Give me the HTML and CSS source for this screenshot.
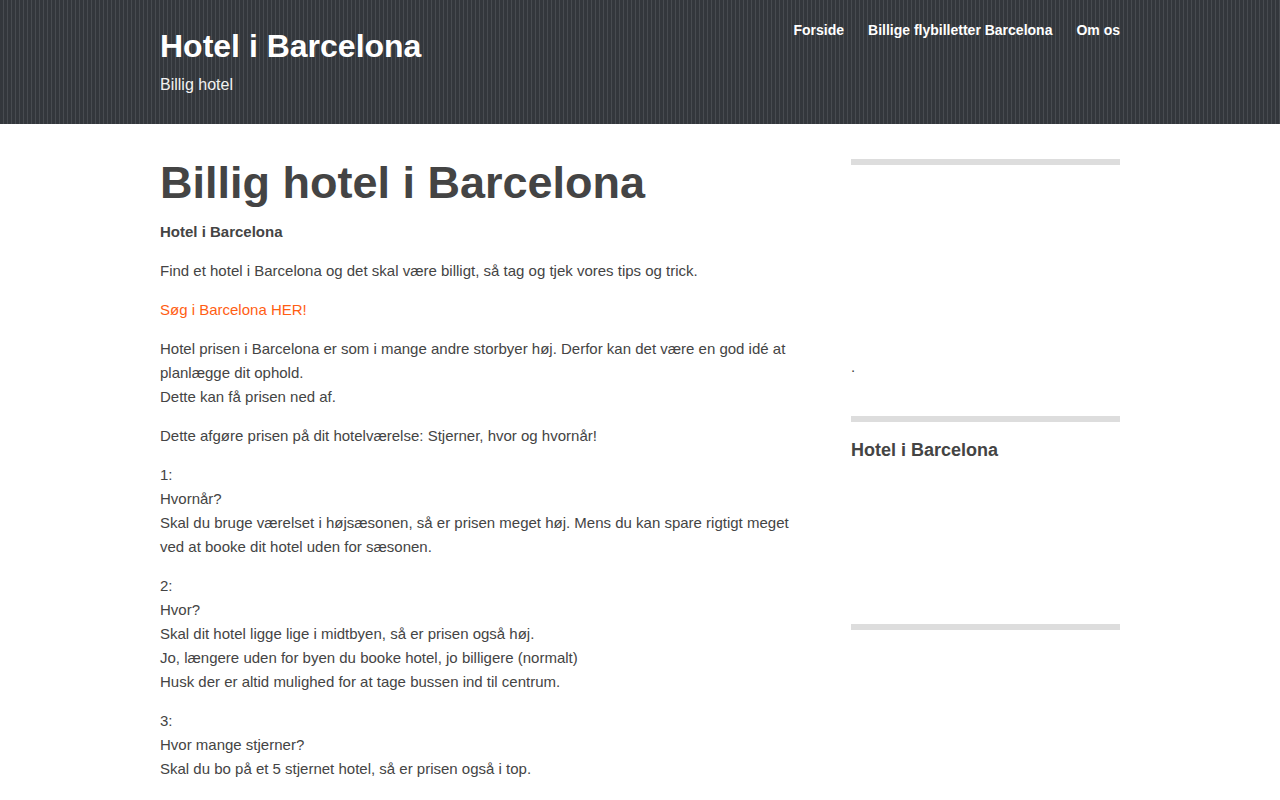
FILE: index.html
```html
<!DOCTYPE html>
<html lang="da">
<head>
<meta charset="utf-8">
<title>Hotel i Barcelona</title>
<link rel="stylesheet" href="styles.css">
</head>
<body>
<header class="site-header">
  <div class="wrap header-inner">
    <div class="branding">
      <div class="site-title">Hotel i Barcelona</div>
      <div class="site-desc">Billig hotel</div>
    </div>
    <nav class="main-nav">
      <a href="#">Forside</a>
      <a href="#">Billige flybilletter Barcelona</a>
      <a href="#">Om os</a>
    </nav>
  </div>
</header>
<div class="wrap main">
  <main class="content">
    <h1 class="entry-title">Billig hotel i Barcelona</h1>
    <p><strong>Hotel i Barcelona</strong></p>
    <p>Find et hotel i Barcelona og det skal være billigt, så tag og tjek vores tips og trick.</p>
    <p><a class="link" href="#">Søg i Barcelona HER!</a></p>
    <p>Hotel prisen i Barcelona er som i mange andre storbyer høj. Derfor kan det være en god idé at planlægge dit ophold.<br>Dette kan få prisen ned af.</p>
    <p>Dette afgøre prisen på dit hotelværelse: Stjerner, hvor og hvornår!</p>
    <p>1:<br>Hvornår?<br>Skal du bruge værelset i højsæsonen, så er prisen meget høj. Mens du kan spare rigtigt meget ved at booke dit hotel uden for sæsonen.</p>
    <p>2:<br>Hvor?<br>Skal dit hotel ligge lige i midtbyen, så er prisen også høj.<br>Jo, længere uden for byen du booke hotel, jo billigere (normalt)<br>Husk der er altid mulighed for at tage bussen ind til centrum.</p>
    <p>3:<br>Hvor mange stjerner?<br>Skal du bo på et 5 stjernet hotel, så er prisen også i top.</p>
  </main>
  <aside class="sidebar">
    <section class="widget">
      <div class="ad-space"></div>
      <p class="dot">.</p>
    </section>
    <section class="widget">
      <h3 class="widget-title">Hotel i Barcelona</h3>
      <div class="ad-space small"></div>
    </section>
    <section class="widget"></section>
  </aside>
</div>
</body>
</html>
```

FILE: styles.css
```css
html, body {
  margin: 0;
  padding: 0;
}
body {
  font-family: "Liberation Sans", Arial, sans-serif;
  font-size: 15px;
  line-height: 24px;
  color: #444;
  background: #fff;
}
.wrap {
  width: 960px;
  margin: 0 auto;
}
.site-header {
  height: 124px;
  background-color: #363a3f;
  background-image: repeating-linear-gradient(90deg, #33373c 0, #33373c 3px, #474b50 3px, #474b50 4px);
  color: #fff;
}
.header-inner {
  display: flex;
  justify-content: space-between;
  align-items: flex-start;
}
.branding {
  padding-top: 26px;
}
.site-title {
  font-size: 32px;
  line-height: 40px;
  font-weight: bold;
}
.site-desc {
  font-size: 16px;
  line-height: 24px;
  margin-top: 7px;
  color: #f2f2f2;
}
.main-nav {
  display: flex;
  gap: 24px;
  padding-top: 20px;
}
.main-nav a {
  color: #fff;
  text-decoration: none;
  font-weight: bold;
  font-size: 14px;
  line-height: 20px;
}
.main {
  display: flex;
  justify-content: space-between;
  padding-top: 35px;
}
.content {
  width: 640px;
}
.entry-title {
  font-size: 45px;
  line-height: 48px;
  font-weight: bold;
  margin: 0 0 13px;
  color: #444;
}
.content p {
  margin: 0 0 15px;
}
.link {
  color: #ff5e14;
  text-decoration: none;
}
.sidebar {
  width: 269px;
}
.widget {
  border-top: 6px solid #ddd;
  margin-bottom: 37px;
}
.ad-space {
  height: 190px;
}
.ad-space.small {
  height: 117px;
}
.dot {
  margin: 0;
}
.widget-title {
  font-size: 18px;
  line-height: 24px;
  font-weight: bold;
  margin: 16px 0 8px;
  color: #444;
}
```
